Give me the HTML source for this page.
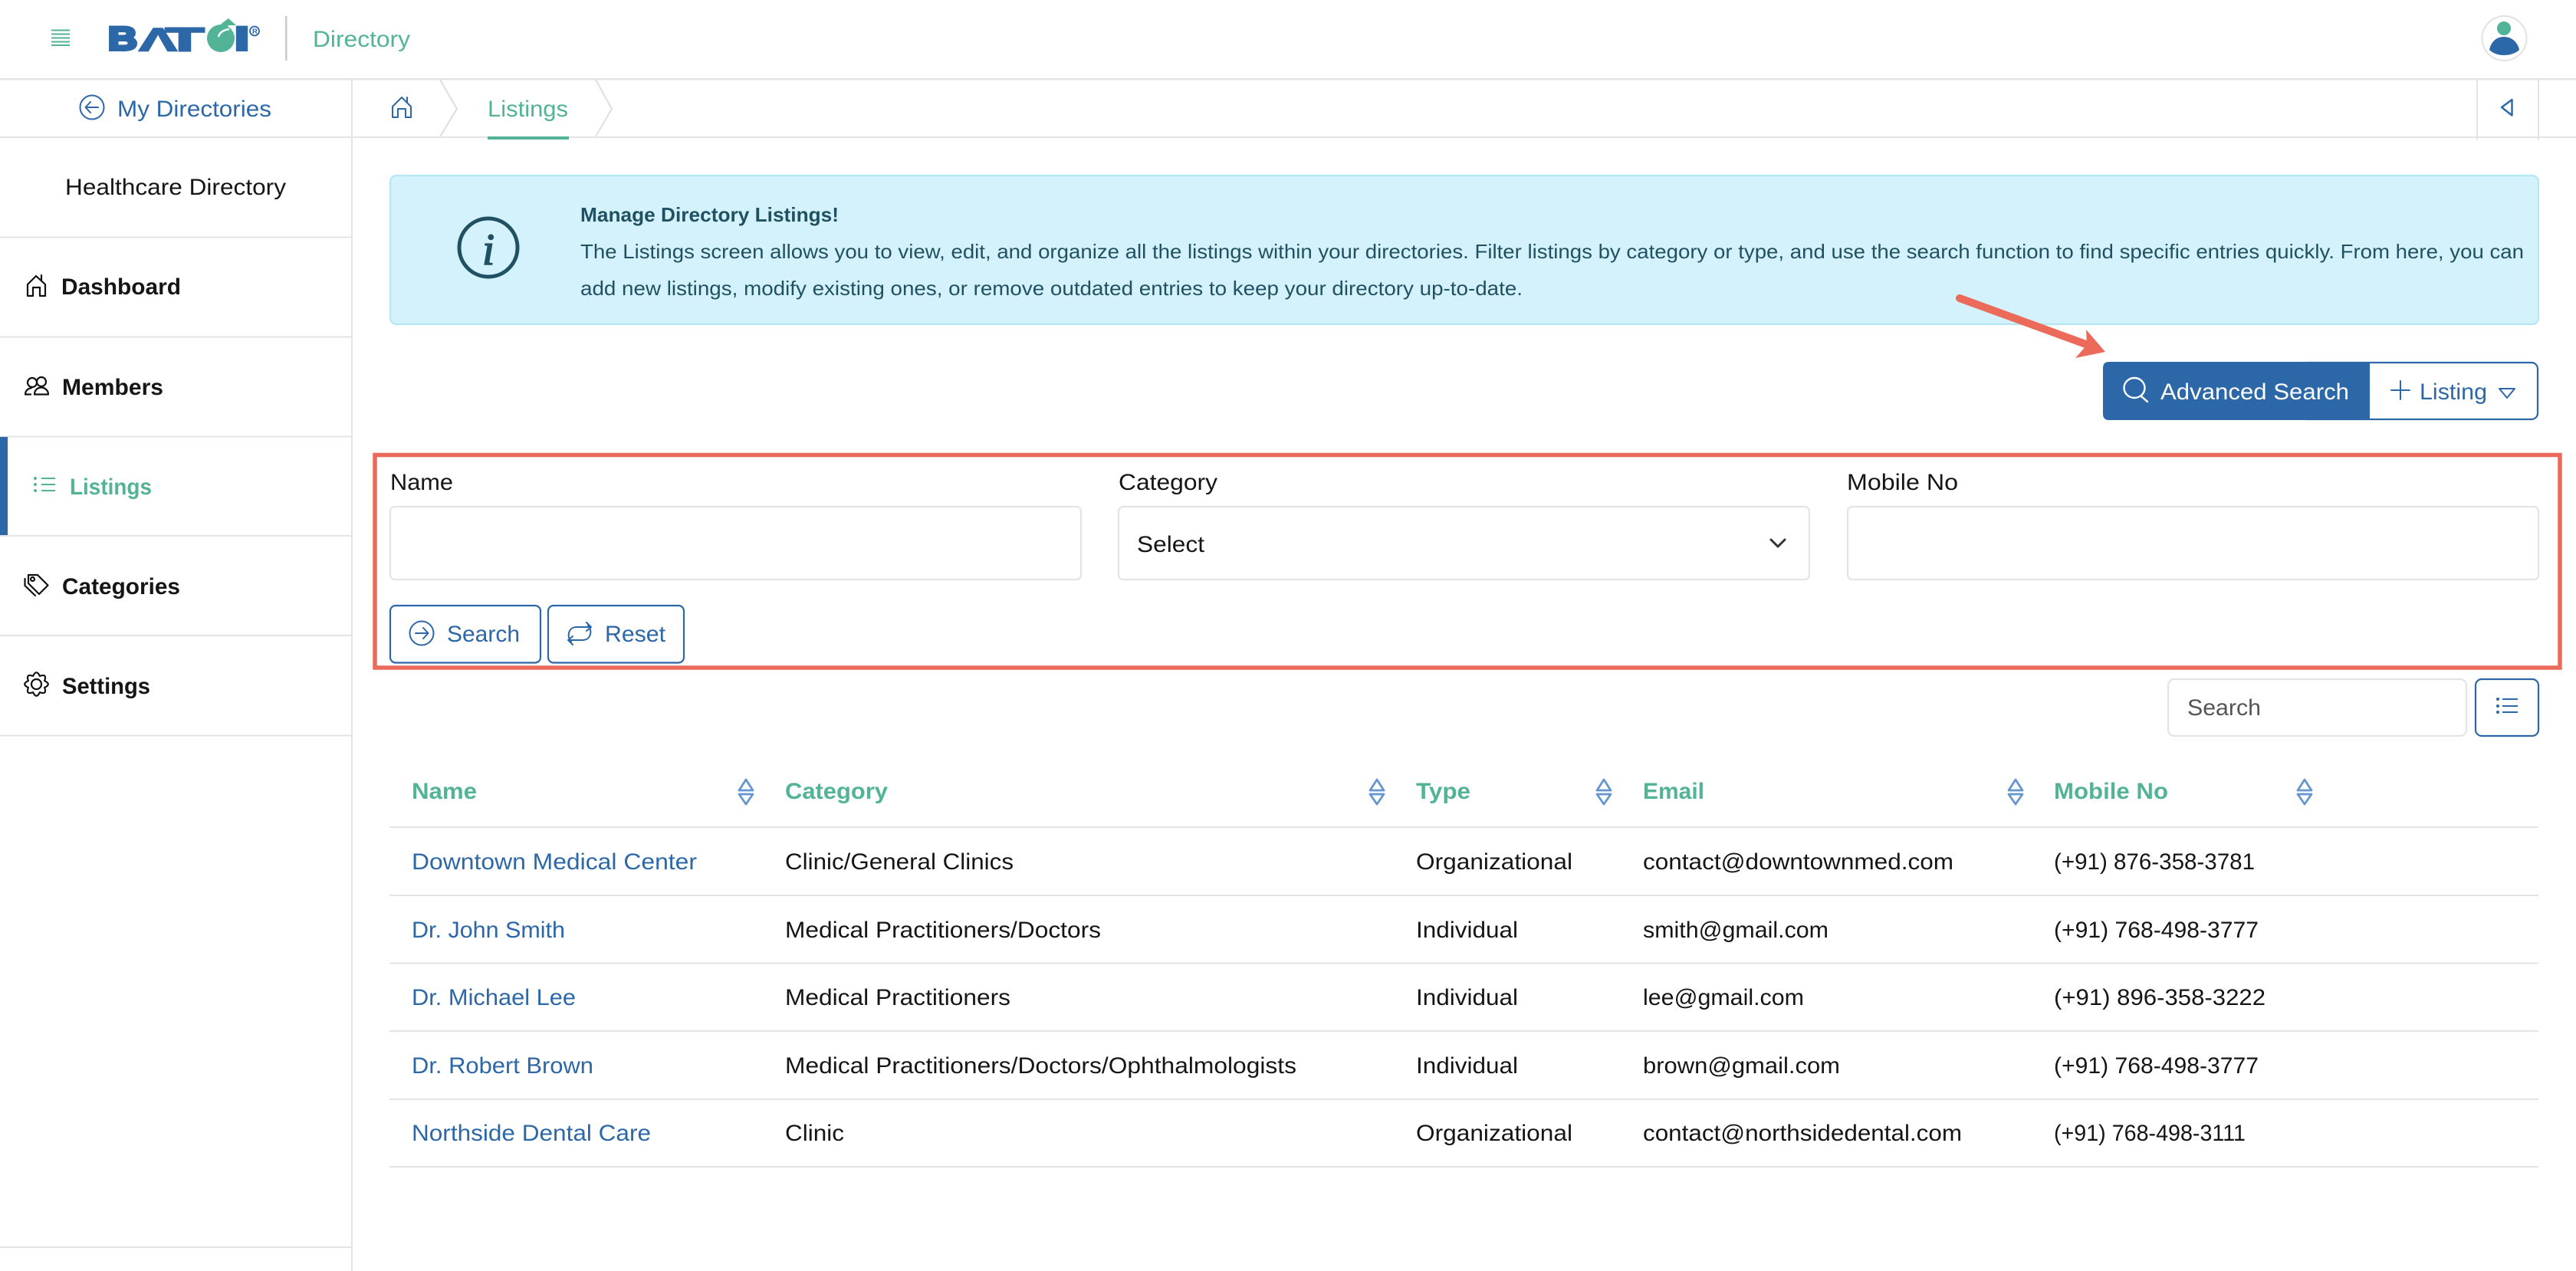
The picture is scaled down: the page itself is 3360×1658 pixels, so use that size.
<!DOCTYPE html>
<html lang="en"><head><meta charset="utf-8"><title>Directory - Listings</title>
<style>
html,body{margin:0;padding:0;background:#fff;width:3360px;height:1658px;overflow:hidden}
svg{display:block}
text{font-family:"Liberation Sans",sans-serif;font-size:30px;fill:#151515}
.b{font-weight:700}
.g{fill:#52b396}
.l{fill:#2c67a8}
.i{fill:#1f5163;font-size:26px}
.ln{fill:#e4e4e7}
.ic{fill:none;stroke:#2c67a8;stroke-width:2.4;stroke-linecap:round;stroke-linejoin:round}
.k{fill:none;stroke:#111;stroke-width:2.2;stroke-linecap:round;stroke-linejoin:round}
.box{fill:#fff;stroke:#e4e4e7;stroke-width:2.2}
.btn{fill:#fff;stroke:#2c67a8;stroke-width:2.2}
.s{fill:none;stroke:#6596cf;stroke-width:2.8;stroke-linejoin:round}
.logo{font-weight:700;font-size:43px;fill:#2c67a8;stroke:#2c67a8;stroke-width:4;stroke-linejoin:miter}
</style></head><body>
<svg xmlns="http://www.w3.org/2000/svg" width="3360" height="1658" viewBox="0 0 3360 1658">
<rect width="3360" height="1658" fill="#fff"/>
<!-- frame lines -->
<rect x="0" y="102" width="3360" height="2.5" class="ln"/>
<rect x="0" y="178" width="3360" height="2" class="ln"/>
<rect x="458" y="103" width="2" height="1555" class="ln"/>
<rect x="0" y="308.500" width="458" height="2" class="ln"/>
<rect x="0" y="438.500" width="458" height="2" class="ln"/>
<rect x="0" y="568.500" width="458" height="2" class="ln"/>
<rect x="0" y="698" width="458" height="2" class="ln"/>
<rect x="0" y="828" width="458" height="2" class="ln"/>
<rect x="0" y="958.500" width="458" height="2" class="ln"/>
<rect x="0" y="1626" width="458" height="2" class="ln"/>
<rect x="0" y="570" width="10" height="128" fill="#2c67a8"/>

<!-- header -->
<g fill="#52b396"><rect x="67" y="38.500" width="24" height="2"/><rect x="67" y="43.500" width="24" height="2"/><rect x="67" y="48.500" width="24" height="2"/><rect x="67" y="53.500" width="24" height="2"/><rect x="67" y="58" width="24" height="2"/></g>
<g>
<text x="141" y="65" textLength="38" lengthAdjust="spacingAndGlyphs" class="logo">B</text>
<text x="181" y="66.500" textLength="50" lengthAdjust="spacingAndGlyphs" class="logo" style="stroke-width:1.500">Λ</text>
<text x="216" y="65.800" textLength="50" lengthAdjust="spacingAndGlyphs" class="logo" style="stroke-width:2.500">T</text>
<circle cx="288" cy="50" r="18" fill="#52b396"/>
<path d="M288 32C291 29 294 27 298 24L308 33L299 33C294 35 290 39 287 44Z" fill="#52b396"/>
<path d="M285 48C286 43 291 39 299 38" fill="none" stroke="#fff" stroke-width="2.500"/>
<text x="306.500" y="65" textLength="18" lengthAdjust="spacingAndGlyphs" class="logo">I</text>
<circle cx="332" cy="40.500" r="6" fill="none" stroke="#2c67a8" stroke-width="1.800"/>
<text x="329" y="44" style="font-size:9.500px;fill:#2c67a8;font-weight:700">R</text>
</g>
<rect x="372" y="21" width="2.500" height="58" fill="#c9c9c9"/>
<text x="408" y="61" textLength="127" lengthAdjust="spacingAndGlyphs" class="g">Directory</text>
<g>
<circle cx="3266.500" cy="50" r="29" fill="#fff" stroke="#e4e4e7" stroke-width="2.200"/>
<circle cx="3266" cy="37" r="9" fill="#52b396"/>
<path d="M3266 48C3256 48 3249 55 3247 65C3252 70 3259 72 3266 72C3273 72 3281 70 3286 65C3284 55 3276 48 3266 48Z" fill="#2c67a8"/>
</g>

<!-- breadcrumb row -->
<g class="ic" style="stroke-width:2"><circle cx="120" cy="140" r="15.500"/><path d="M128 140H112M118 133L111.500 140L118 147"/></g>
<text x="153" y="152" textLength="201" lengthAdjust="spacingAndGlyphs" class="l">My Directories</text>
<path class="ic" d="M512 153V139L524 127L536 139V153H529V142H519V153ZM531 133V127" style="stroke-width:2"/>
<path d="M574 104L596 142L574 178M777 104L798 142L777 178" fill="none" stroke="#e0e0e3" stroke-width="2.200"/>
<text x="636" y="152" textLength="105" lengthAdjust="spacingAndGlyphs" class="g">Listings</text>
<rect x="636" y="178" width="106" height="4" fill="#52b396"/>
<rect x="3230" y="103" width="2" height="80" class="ln"/>
<rect x="3310" y="103" width="2" height="80" class="ln"/>
<path d="M3276.500 130V150.500L3263 140Z" class="ic"/>

<!-- sidebar -->
<text x="85" y="254" textLength="288" lengthAdjust="spacingAndGlyphs">Healthcare Directory</text>
<path class="k" d="M36 386V371L47 360L59 371V386H52V375H43V386ZM54 366V359"/>
<text x="80" y="384" textLength="156" lengthAdjust="spacingAndGlyphs" class="b">Dashboard</text>
<g class="k"><circle cx="42" cy="499" r="6"/><circle cx="54" cy="498" r="6"/><path d="M45 514.500C45 508 50 505.500 54 505.500C58 505.500 63 509 63 514.500ZM40 514.500H33C33 510 36 507 41 506"/></g>
<text x="81" y="515" textLength="132" lengthAdjust="spacingAndGlyphs" class="b">Members</text>
<g fill="#52b396"><circle cx="46" cy="624" r="2"/><circle cx="46" cy="632" r="2"/><circle cx="46" cy="640" r="2"/><rect x="54" y="623" width="18" height="2"/><rect x="54" y="631" width="18" height="2"/><rect x="54" y="639" width="18" height="2"/></g>
<text x="91" y="645" textLength="107" lengthAdjust="spacingAndGlyphs" class="b g">Listings</text>
<g class="k"><path d="M37 750H49L62.500 763.500L51 775L37 761ZM32.500 755V764L46 777"/><circle cx="42.500" cy="755.500" r="2.500"/></g>
<text x="81" y="775" textLength="154" lengthAdjust="spacingAndGlyphs" class="b">Categories</text>
<g class="k" transform="translate(47.500 892.500)"><path d="M10.600 -4.400Q20 0 10.600 4.400Q14.100 14.100 4.400 10.600Q0 20 -4.400 10.600Q-14.100 14.100 -10.600 4.400Q-20 0 -10.600 -4.400Q-14.100 -14.100 -4.400 -10.600Q0 -20 4.400 -10.600Q14.100 -14.100 10.600 -4.400Z"/><circle r="6.500"/></g>
<text x="81" y="905" textLength="115" lengthAdjust="spacingAndGlyphs" class="b">Settings</text>

<!-- info box -->
<rect x="509" y="229" width="2802" height="194" rx="8" fill="#d4f2fb" stroke="#b3e7f5" stroke-width="2.200"/>
<circle cx="637" cy="323" r="38" fill="none" stroke="#1f5163" stroke-width="5"/>
<text x="637" y="345" text-anchor="middle" style="font-family:'Liberation Serif',serif;font-style:italic;font-size:58px;fill:#1f5163;stroke:#1f5163;stroke-width:1.600">i</text>
<text x="757" y="289" textLength="337" lengthAdjust="spacingAndGlyphs" class="i b">Manage Directory Listings!</text>
<text x="757" y="337" textLength="2535" lengthAdjust="spacingAndGlyphs" class="i">The Listings screen allows you to view, edit, and organize all the listings within your directories. Filter listings by category or type, and use the search function to find specific entries quickly. From here, you can</text>
<text x="757" y="385" textLength="1229" lengthAdjust="spacingAndGlyphs" class="i">add new listings, modify existing ones, or remove outdated entries to keep your directory up-to-date.</text>

<!-- arrow -->
<path d="M2556 389L2726 451" stroke="#ec6a5a" stroke-width="10" stroke-linecap="round" fill="none"/>
<path d="M2746 459L2721 430L2722 450L2707 467Z" fill="#ec6a5a"/>

<!-- top actions -->
<rect x="3000" y="473" width="310" height="74" rx="8" class="btn"/>
<path d="M2751 472H3091V548H2751Q2743 548 2743 540V480Q2743 472 2751 472Z" fill="#2c67a8"/>
<g fill="none" stroke="#fff" stroke-width="2.400" stroke-linecap="round"><ellipse cx="2784" cy="506" rx="13.500" ry="13"/><path d="M2793 517L2801 524"/></g>
<text x="2818" y="521" textLength="246" lengthAdjust="spacingAndGlyphs" style="fill:#fff">Advanced Search</text>
<path class="ic" d="M3119 509H3143M3131 497V521" style="stroke-width:2"/>
<text x="3156" y="521" textLength="88" lengthAdjust="spacingAndGlyphs" class="l">Listing</text>
<path class="ic" d="M3260 507H3280L3270 519Z" style="stroke-width:2"/>

<!-- advanced search panel -->
<rect x="489" y="593.500" width="2850" height="277.500" fill="none" stroke="#ec6a5a" stroke-width="5.500"/>
<text x="509" y="639" textLength="82" lengthAdjust="spacingAndGlyphs">Name</text>
<text x="1459" y="639" textLength="129" lengthAdjust="spacingAndGlyphs">Category</text>
<text x="2409" y="639" textLength="145" lengthAdjust="spacingAndGlyphs">Mobile No</text>
<rect x="509" y="661" width="901" height="95" rx="6" class="box"/>
<rect x="1459" y="661" width="901" height="95" rx="6" class="box"/>
<rect x="2410" y="661" width="901" height="95" rx="6" class="box"/>
<text x="1483" y="720" textLength="88" lengthAdjust="spacingAndGlyphs">Select</text>
<path d="M2310 704L2319 713L2328 704" fill="none" stroke="#333" stroke-width="3" stroke-linecap="round" stroke-linejoin="round"/>
<rect x="509" y="790" width="196" height="74.500" rx="7" class="btn"/>
<rect x="715" y="790" width="177" height="74.500" rx="7" class="btn"/>
<g class="ic" style="stroke-width:2"><circle cx="550" cy="826" r="15.500"/><path d="M542 826H558M552 819L558.500 826L552 833"/></g>
<text x="583" y="837" textLength="95" lengthAdjust="spacingAndGlyphs" class="l">Search</text>
<g class="ic" style="stroke-width:2"><path d="M745 837C739 831 741 818 752 818H771M765 812L771 818L765 823"/><path d="M767 816C773 822 771 835 760 835H741M747 841L741 835L747 830"/></g>
<text x="789" y="837" textLength="79" lengthAdjust="spacingAndGlyphs" class="l">Reset</text>

<!-- table toolbar -->
<rect x="2828" y="886" width="389" height="74" rx="8" class="box"/>
<text x="2853" y="933" textLength="96" lengthAdjust="spacingAndGlyphs" style="fill:#555">Search</text>
<rect x="3229" y="886" width="82" height="74" rx="8" class="btn"/>
<g fill="#2c67a8"><circle cx="3258" cy="912" r="2"/><circle cx="3258" cy="921" r="2"/><circle cx="3258" cy="929" r="2"/><rect x="3264" y="911" width="20" height="2"/><rect x="3264" y="920" width="20" height="2"/><rect x="3264" y="928" width="20" height="2"/></g>

<!-- table head -->
<text x="537" y="1042" textLength="85" lengthAdjust="spacingAndGlyphs" class="b g">Name</text>
<text x="1024" y="1042" textLength="134" lengthAdjust="spacingAndGlyphs" class="b g">Category</text>
<text x="1847" y="1042" textLength="71" lengthAdjust="spacingAndGlyphs" class="b g">Type</text>
<text x="2143" y="1042" textLength="80" lengthAdjust="spacingAndGlyphs" class="b g">Email</text>
<text x="2679" y="1042" textLength="149" lengthAdjust="spacingAndGlyphs" class="b g">Mobile No</text>
<path class="s" d="M964 1031L973 1017L982 1031ZM964 1036H982L973 1049Z"/>
<path class="s" d="M1787 1031L1796 1017L1805 1031ZM1787 1036H1805L1796 1049Z"/>
<path class="s" d="M2083 1031L2092 1017L2101 1031ZM2083 1036H2101L2092 1049Z"/>
<path class="s" d="M2620 1031L2629 1017L2638 1031ZM2620 1036H2638L2629 1049Z"/>
<path class="s" d="M2997 1031L3006 1017L3015 1031ZM2997 1036H3015L3006 1049Z"/>
<rect x="508" y="1078" width="2803" height="2" class="ln"/>
<rect x="508" y="1167" width="2803" height="2" class="ln"/>
<rect x="508" y="1255.500" width="2803" height="2" class="ln"/>
<rect x="508" y="1344" width="2803" height="2" class="ln"/>
<rect x="508" y="1433" width="2803" height="2" class="ln"/>
<rect x="508" y="1521" width="2803" height="2" class="ln"/>

<!-- rows -->
<text x="537" y="1134" textLength="372" lengthAdjust="spacingAndGlyphs" class="l">Downtown Medical Center</text>
<text x="1024" y="1134" textLength="298" lengthAdjust="spacingAndGlyphs">Clinic/General Clinics</text>
<text x="1847" y="1134" textLength="204" lengthAdjust="spacingAndGlyphs">Organizational</text>
<text x="2143" y="1134" textLength="405" lengthAdjust="spacingAndGlyphs">contact@downtownmed.com</text>
<text x="2679" y="1134" textLength="262" lengthAdjust="spacingAndGlyphs">(+91) 876-358-3781</text>

<text x="537" y="1223" textLength="200" lengthAdjust="spacingAndGlyphs" class="l">Dr. John Smith</text>
<text x="1024" y="1223" textLength="412" lengthAdjust="spacingAndGlyphs">Medical Practitioners/Doctors</text>
<text x="1847" y="1223" textLength="133" lengthAdjust="spacingAndGlyphs">Individual</text>
<text x="2143" y="1223" textLength="242" lengthAdjust="spacingAndGlyphs">smith@gmail.com</text>
<text x="2679" y="1223" textLength="267" lengthAdjust="spacingAndGlyphs">(+91) 768-498-3777</text>

<text x="537" y="1311" textLength="214" lengthAdjust="spacingAndGlyphs" class="l">Dr. Michael Lee</text>
<text x="1024" y="1311" textLength="294" lengthAdjust="spacingAndGlyphs">Medical Practitioners</text>
<text x="1847" y="1311" textLength="133" lengthAdjust="spacingAndGlyphs">Individual</text>
<text x="2143" y="1311" textLength="210" lengthAdjust="spacingAndGlyphs">lee@gmail.com</text>
<text x="2679" y="1311" textLength="276" lengthAdjust="spacingAndGlyphs">(+91) 896-358-3222</text>

<text x="537" y="1400" textLength="237" lengthAdjust="spacingAndGlyphs" class="l">Dr. Robert Brown</text>
<text x="1024" y="1400" textLength="667" lengthAdjust="spacingAndGlyphs">Medical Practitioners/Doctors/Ophthalmologists</text>
<text x="1847" y="1400" textLength="133" lengthAdjust="spacingAndGlyphs">Individual</text>
<text x="2143" y="1400" textLength="257" lengthAdjust="spacingAndGlyphs">brown@gmail.com</text>
<text x="2679" y="1400" textLength="267" lengthAdjust="spacingAndGlyphs">(+91) 768-498-3777</text>

<text x="537" y="1488" textLength="312" lengthAdjust="spacingAndGlyphs" class="l">Northside Dental Care</text>
<text x="1024" y="1488" textLength="77" lengthAdjust="spacingAndGlyphs">Clinic</text>
<text x="1847" y="1488" textLength="204" lengthAdjust="spacingAndGlyphs">Organizational</text>
<text x="2143" y="1488" textLength="416" lengthAdjust="spacingAndGlyphs">contact@northsidedental.com</text>
<text x="2679" y="1488" textLength="250" lengthAdjust="spacingAndGlyphs">(+91) 768-498-3111</text>
</svg>
</body></html>
